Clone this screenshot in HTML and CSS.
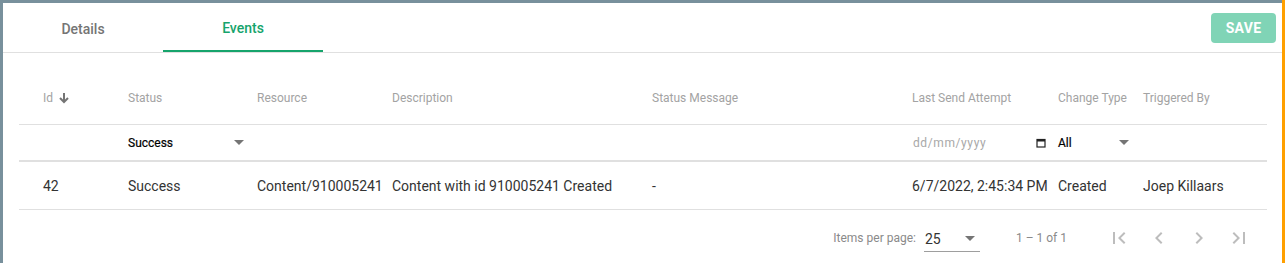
FILE: index.html
```html
<!DOCTYPE html>
<html lang="en">
<head>
    <meta charset="UTF-8">
    <title>Events</title>
    <link rel="stylesheet" href="styles.css">
</head>
<body>
    <div class="frame">
        <div class="card">
            <div class="tabbar">
                <div class="tab">Details</div>
                <div class="tab active">Events</div>
                <button class="btn-save">SAVE</button>
            </div>
            <div class="table">
                <div class="row head">
                    <div class="cell first">Id
                        <svg class="sort" width="12" height="12" viewBox="0 0 12 12"><path d="M6 1v9M2 6l4 4 4-4" fill="none" stroke="#757575" stroke-width="2"/></svg>
                    </div>
                    <div class="cell">Status</div>
                    <div class="cell">Resource</div>
                    <div class="cell">Description</div>
                    <div class="cell">Status Message</div>
                    <div class="cell">Last Send Attempt</div>
                    <div class="cell">Change Type</div>
                    <div class="cell">Triggered By</div>
                </div>
                <div class="row filters">
                    <div class="cell first"></div>
                    <div class="cell"><div class="select">Success<span class="caret"></span></div></div>
                    <div class="cell"></div>
                    <div class="cell"></div>
                    <div class="cell"></div>
                    <div class="cell"><div class="date">dd/mm/yyyy
                        <svg width="10" height="10" viewBox="0 0 10 10"><rect x="1" y="1.5" width="8" height="7.5" fill="none" stroke="#222" stroke-width="1.2"/><rect x="1" y="1.5" width="8" height="2" fill="#222"/></svg>
                    </div></div>
                    <div class="cell"><div class="select small">All<span class="caret"></span></div></div>
                    <div class="cell"></div>
                </div>
                <div class="row data">
                    <div class="cell first">42</div>
                    <div class="cell">Success</div>
                    <div class="cell">Content/910005241</div>
                    <div class="cell">Content with id 910005241 Created</div>
                    <div class="cell">-</div>
                    <div class="cell">6/7/2022, 2:45:34 PM</div>
                    <div class="cell">Created</div>
                    <div class="cell">Joep Killaars</div>
                </div>
                <div class="paginator">
                    <span class="label">Items per page:</span>
                    <div class="page-size">25<span class="caret"></span></div>
                    <span class="range">1 &ndash; 1 of 1</span>
                    <span class="nav"><svg width="24" height="24" viewBox="0 0 24 24"><path d="M18.41 16.59L13.82 12l4.59-4.59L17 6l-6 6 6 6zM6 6h2v12H6z"/></svg></span>
                    <span class="nav"><svg width="24" height="24" viewBox="0 0 24 24"><path d="M15.41 7.41L14 6l-6 6 6 6 1.41-1.41L10.83 12z"/></svg></span>
                    <span class="nav"><svg width="24" height="24" viewBox="0 0 24 24"><path d="M10 6L8.59 7.41 13.17 12l-4.58 4.59L10 18l6-6z"/></svg></span>
                    <span class="nav"><svg width="24" height="24" viewBox="0 0 24 24"><path d="M5.59 7.41L10.18 12l-4.59 4.59L7 18l6-6-6-6zM16 6h2v12h-2z"/></svg></span>
                </div>
            </div>
        </div>
    </div>
    <div class="edge"></div>
</body>
</html>
```

FILE: styles.css
```css
body {
    margin: 0;
    height: 263px;
    display: flex;
    overflow: hidden;
    font-family: Roboto, "Liberation Sans", sans-serif;
    color: rgba(0, 0, 0, 0.87);
}
.frame {
    flex: 1;
    background: #78909c;
    padding: 3px 0 0 3px;
}
.edge {
    width: 3px;
    background: #ffa000;
}
.card {
    background: #fff;
    height: 100%;
}
.tabbar {
    display: flex;
    align-items: center;
    height: 49px;
    border-bottom: 1px solid #e0e0e0;
}
.tab {
    width: 160px;
    height: 49px;
    box-sizing: border-box;
    display: flex;
    align-items: center;
    justify-content: center;
    padding-top: 2px;
    font-size: 14px;
    font-weight: 500;
    color: #757575;
}
.tab.active {
    color: #16a46c;
    border-bottom: 2px solid #16a46c;
}
.btn-save {
    margin: 1px 6px 0 auto;
    width: 65px;
    height: 30px;
    border: none;
    border-radius: 4px;
    background: #80d4b6;
    color: #fff;
    font-family: Roboto, sans-serif;
    font-size: 14px;
    font-weight: 700;
    letter-spacing: 0.3px;
}
.table {
    margin: 16px 15px 0 16px;
}
.row {
    display: grid;
    grid-template-columns: 109px 129px 135px 260px 260px 146px 85px 124px;
    align-items: center;
    border-bottom: 1px solid #e0e0e0;
}
.cell.first {
    padding-left: 24px;
    display: flex;
    align-items: center;
}
.head {
    height: 56px;
    padding-top: 2px;
    box-sizing: border-box;
    font-size: 12px;
    color: #a3a3a3;
}
.sort {
    margin-left: 5px;
}
.filters {
    height: 35px;
    border-bottom: 2px solid #e0e0e0;
    font-size: 12px;
}
.select {
    display: flex;
    align-items: center;
    width: 116px;
    color: #000;
    -webkit-text-stroke: 0.2px #000;
}
.select.small {
    width: 71px;
}
.caret {
    margin-left: auto;
    width: 0;
    height: 0;
    border-left: 5px solid transparent;
    border-right: 5px solid transparent;
    border-top: 5px solid #757575;
}
.date {
    display: flex;
    align-items: center;
    justify-content: space-between;
    width: 133px;
    padding-left: 1px;
    color: #a8a8a8;
    letter-spacing: 0.6px;
}
.data {
    height: 47px;
    font-size: 14px;
    color: #333;
}
.paginator {
    display: flex;
    align-items: center;
    justify-content: flex-end;
    height: 56px;
    padding-right: 8px;
    font-size: 12px;
    color: #8a8a8a;
}
.page-size {
    display: flex;
    align-items: center;
    width: 56px;
    box-sizing: border-box;
    margin: 0 36px 0 8px;
    padding: 6px 5px 4px 1px;
    border-bottom: 1px solid #9e9e9e;
    font-size: 14px;
    color: #333;
}
.range {
    margin-right: 32px;
}
.nav {
    width: 40px;
    height: 40px;
    display: flex;
    align-items: center;
    justify-content: center;
    fill: #bdbdbd;
}
```
